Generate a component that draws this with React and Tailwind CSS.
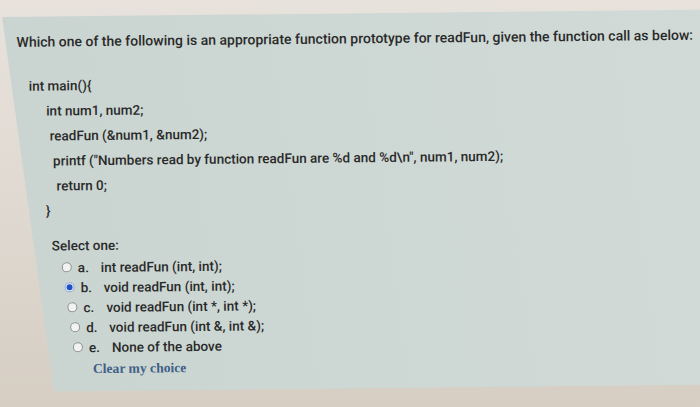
import React from "react";

const sans = { fontFamily: 'Roboto, "Liberation Sans", Arial, sans-serif' };

function Radio({ checked }) {
  if (checked) {
    return (
      <span className="flex h-[10px] w-[10px] items-center justify-center rounded-full border border-[#8fa8d8] bg-[#e8eef8]">
        <span className="h-[6px] w-[6px] rounded-full bg-[#1f4fc4]" />
      </span>
    );
  }
  return <span className="h-[10px] w-[10px] rounded-full border border-[#8d918f] bg-[#f1f2f1]" />;
}

function Option({ letter, text, checked }) {
  return (
    <div className="flex h-[20px] w-fit items-center whitespace-nowrap pl-[25px] [transform:skewX(-7.3deg)]">
      <Radio checked={checked} />
      <span className="ml-[6px] w-[23px]">{letter}.</span>
      <span>{text}</span>
    </div>
  );
}

export default function App() {
  return (
    <div className="h-[407px] w-[700px] overflow-hidden bg-gradient-to-b from-[#e8e2dd] via-[#e0d9d1] to-[#d6cec3] pt-[13px] font-medium text-[#2a2a2a]" style={sans}>
      <div className="ml-[28px] h-[375px] w-[720px] bg-gradient-to-r from-[#cad5d1] to-[#d1dad7] pt-[15px] [transform:rotate(-0.6deg)_skewX(7.3deg)]">
        <div className="h-[20px] w-fit whitespace-nowrap pl-[11px] text-[14px] leading-[20px] [transform:skewX(-7.3deg)]">
          Which one of the following is an appropriate function prototype for readFun, given the function call as below:
        </div>
        <div className="mt-[22px] whitespace-nowrap text-[13.5px]">
          <div className="h-[25px] w-fit pl-[17px] leading-[25px] [transform:skewX(-7.3deg)]">int main(){"{"}</div>
          <div className="h-[25px] w-fit pl-[31px] leading-[25px] [transform:skewX(-7.3deg)]">int num1, num2;</div>
          <div className="h-[25px] w-fit pl-[31px] leading-[25px] [transform:skewX(-7.3deg)]">readFun (&amp;num1, &amp;num2);</div>
          <div className="h-[25px] w-fit pl-[31px] leading-[25px] [transform:skewX(-7.3deg)]">printf ("Numbers read by function readFun are %d and %d\n", num1, num2);</div>
          <div className="h-[25px] w-fit pl-[31px] leading-[25px] [transform:skewX(-7.3deg)]">return 0;</div>
          <div className="h-[25px] w-fit pl-[17px] leading-[25px] [transform:skewX(-7.3deg)]">{"}"}</div>
        </div>
        <div className="mt-[12px] text-[13.5px]">
          <div className="h-[20px] w-fit pl-[18px] leading-[20px] [transform:skewX(-7.3deg)]">Select one:</div>
          <div className="mt-[2px]">
            <Option letter="a" text="int readFun (int, int);" />
            <Option letter="b" text="void readFun (int, int);" checked />
            <Option letter="c" text="void readFun (int *, int *);" />
            <Option letter="d" text="void readFun (int &, int &);" />
            <Option letter="e" text="None of the above" />
          </div>
          <div
            className="mt-[2px] h-[20px] w-fit whitespace-nowrap pl-[42px] text-[13.6px] font-bold leading-[20px] text-[#3f6086] [transform:skewX(-7.3deg)]"
            style={{ fontFamily: '"Liberation Serif", serif' }}
          >
            Clear my choice
          </div>
        </div>
      </div>
    </div>
  );
}
